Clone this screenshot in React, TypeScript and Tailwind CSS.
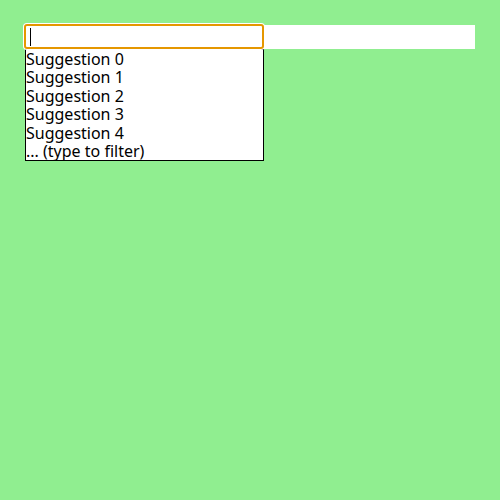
import React from "react";

export default function App() {
  const items = ["Suggestion 0", "Suggestion 1", "Suggestion 2", "Suggestion 3", "Suggestion 4", "... (type to filter)"];
  return (
    <div className="w-[500px] h-[500px] bg-[#90ee90] p-[25px]" style={{ fontFamily: '"Noto Sans", sans-serif' }}>
      <div className="w-[450px] h-[24px] bg-white flex">
        <div className="w-[240px] h-[25px] -mt-px -ml-px border-2 border-[#e59700] rounded-[3px] bg-white flex items-center pl-[4px] shadow-[0_0_0_1px_#ffffff]">
          <div className="w-px h-[18px] bg-black" />
        </div>
      </div>
      <div className="w-[239px] border border-black bg-white text-[16px] leading-[1.15] text-black">
        {items.map((t) => (
          <div key={t}>{t}</div>
        ))}
      </div>
    </div>
  );
}
